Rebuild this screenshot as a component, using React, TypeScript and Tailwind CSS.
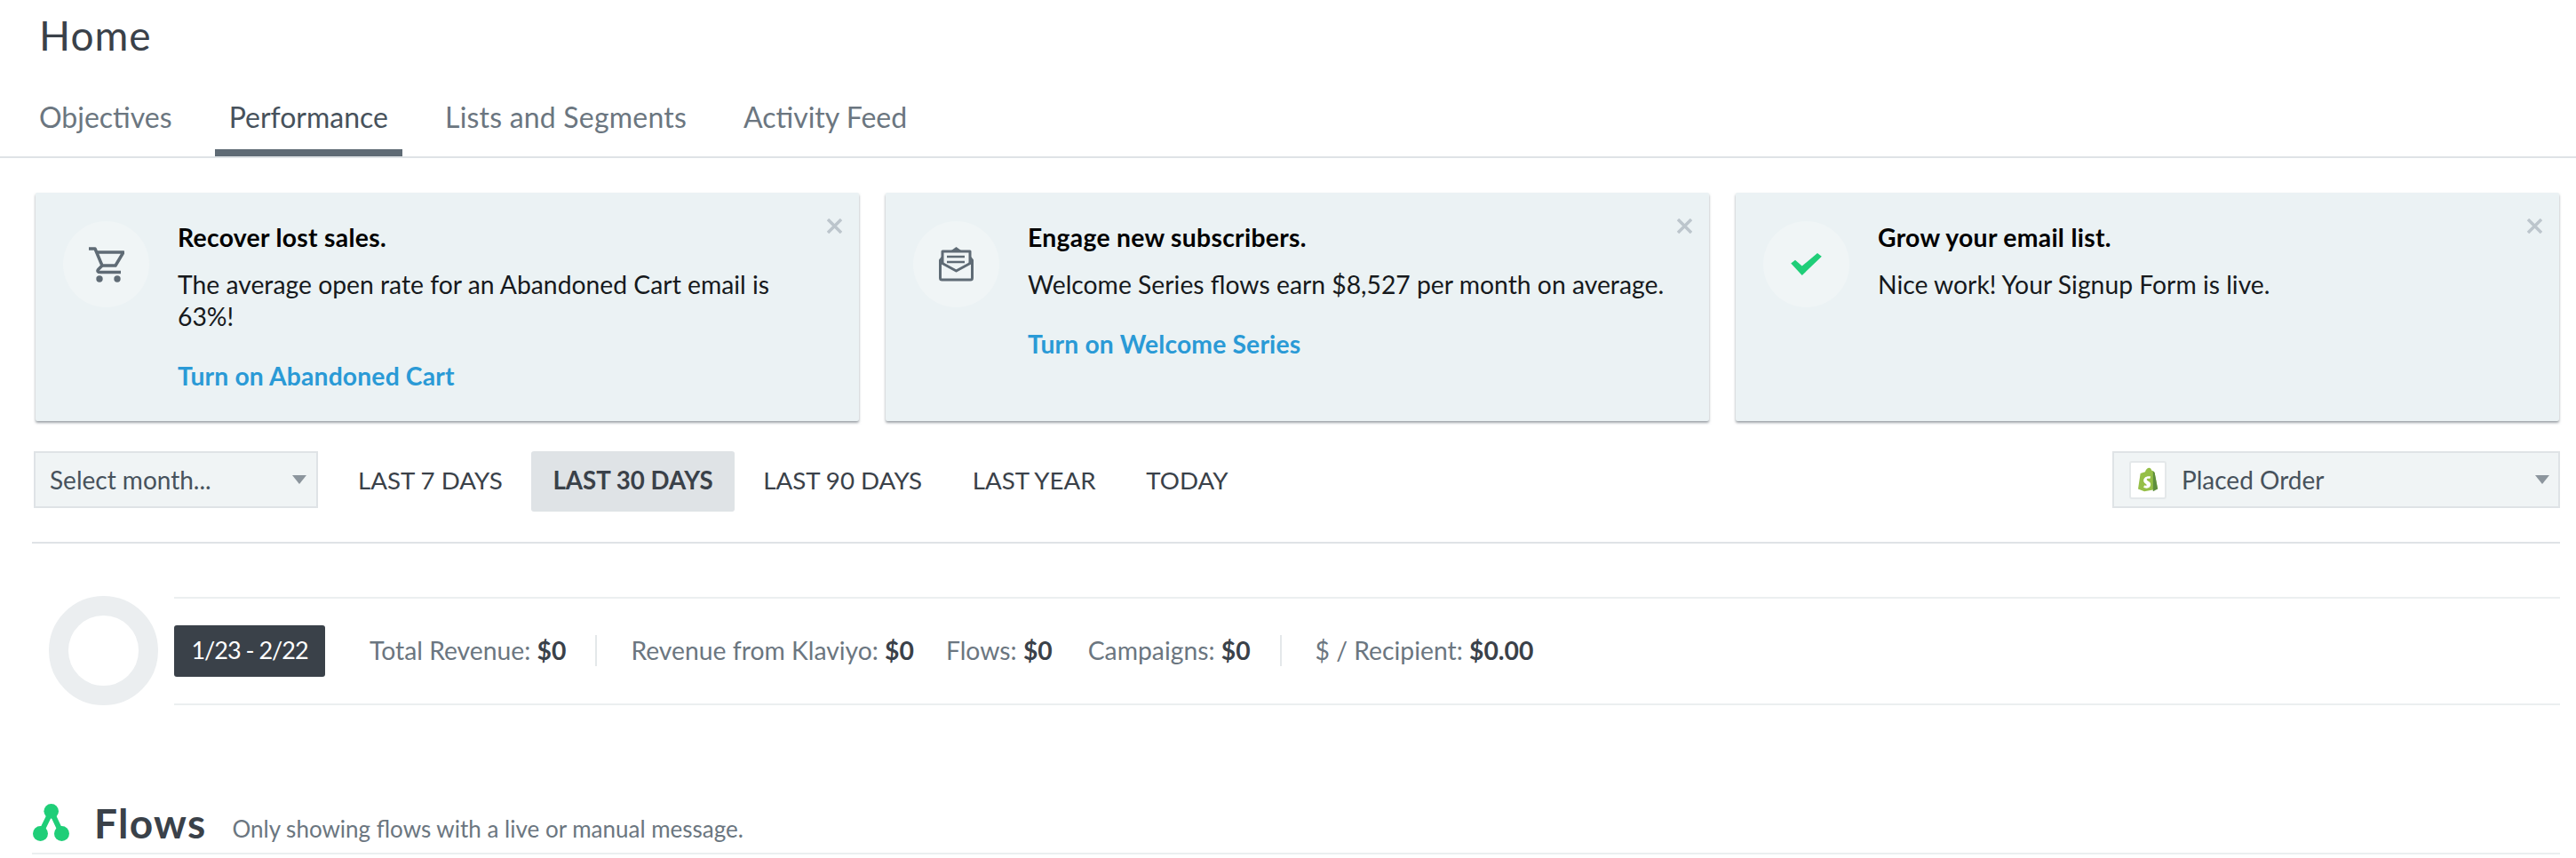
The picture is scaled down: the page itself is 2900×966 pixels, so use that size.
import { ReactNode } from 'react';

function CartIcon() {
    return (
        <svg width="40" height="40" viewBox="0 0 40 40" fill="none" stroke="#5f6b75" strokeWidth="3.500">
            <path d="M0 2h7l8 19h15l9-15H9" strokeLinejoin="round" />
            <path d="M15 21l-4 4c-2 2-1 3.500 2 3.500h23" strokeLinejoin="round" />
            <circle cx="12" cy="36" r="3.700" fill="#5f6b75" stroke="none" />
            <circle cx="32" cy="36" r="3.700" fill="#5f6b75" stroke="none" />
        </svg>
    );
}

function MailIcon() {
    return (
        <svg width="39" height="39" viewBox="0 0 39 39" fill="none" stroke="#5f6b75" strokeWidth="3">
            <path d="M4 18V5h31v13" strokeLinejoin="round" />
            <path d="M14 4l5.500-4L25 4z" fill="#5f6b75" stroke="none" />
            <path d="M9 11h20M9 17h20" strokeWidth="2.500" />
            <path d="M4 12l-2.500 3v20a2 2 0 0 0 2 2h32a2 2 0 0 0 2-2V15L35 12" strokeLinejoin="round" />
            <path d="M3 18l16.500 9L36 18" strokeLinejoin="round" />
        </svg>
    );
}

function CheckIcon() {
    return (
        <svg width="35" height="25" viewBox="0 0 36 26" fill="#1fce78">
            <path d="M0 12l5-4 8 7L31 0l5 4-23 22z" />
        </svg>
    );
}

function CloseIcon() {
    return (
        <svg width="17" height="17" viewBox="0 0 17 17" stroke="#bcc5cc" strokeWidth="3.500">
            <path d="M1 1l15 15M16 1L1 16" />
        </svg>
    );
}

function Caret() {
    return <div className="w-0 h-0 border-l-[8.500px] border-r-[8.500px] border-t-[10px] border-l-transparent border-r-transparent border-t-[#8c959d]" />;
}

function ShopifyIcon() {
    return (
        <svg width="23" height="28" viewBox="0 0 26 30">
            <path d="M3 7l6-2c1-3 3-5 5-5s3 2 3 3l2 1 2 2 4 21-17 3L0 27z" fill="#95bf47" />
            <path d="M19 4l2 2 4 21-6 3z" fill="#5e8e3e" />
            <path d="M16 11l-1 3c-3-1-4 0-4 1 0 2 5 2 5 6 0 3-2 5-5 5-2 0-4-1-4-1l1-3c1 1 3 1 3 0 0-2-4-2-4-6 0-3 3-6 9-5z" fill="#fff" />
        </svg>
    );
}

function FlowsIcon() {
    return (
        <svg width="41" height="42" viewBox="0 0 41 42" fill="#1fce78">
            <circle cx="20.700" cy="8.300" r="8.300" />
            <circle cx="8.500" cy="33.500" r="8.500" />
            <circle cx="32.500" cy="33.500" r="8.500" />
            <path d="M20.700 8.500L8.500 33.500M20.700 8.500l11.800 25" stroke="#1fce78" strokeWidth="6" />
        </svg>
    );
}

function PromoCard({ icon, title, body, link }: { icon: ReactNode; title: string; body: string; link?: string }) {
    return (
        <div className="relative flex-1 h-[257px] bg-[#ebf2f4] shadow-[0_2px_3px_rgba(90,100,110,0.6)] pl-[31px] pt-[32px] flex rounded-[2px]">
            <div className="w-[97px] h-[97px] rounded-full bg-[#f0f5f6] flex items-center justify-center shrink-0">{icon}</div>
            <div className="ml-[32px] w-[735px]">
                <h3 className="text-[28.300px] tracking-[0.300px] leading-[36px] font-bold text-black">{title}</h3>
                <p className="text-[28.300px] leading-[36px] text-[#16191c] mt-[17px]">{body}</p>
                {link && <a className="block text-[28.300px] tracking-[0.150px] leading-[36px] font-bold text-[#2a9ad6] mt-[31px]">{link}</a>}
            </div>
            <button className="absolute right-[19px] top-[29px]"><CloseIcon /></button>
        </div>
    );
}

function Stat({ label, value, className }: { label: string; value: string; className?: string }) {
    return (
        <span className={className}>
            {label} <b className="font-bold text-[#3a4149]">{value}</b>
        </span>
    );
}

export default function App() {
    const tabs = ['Objectives', 'Performance', 'Lists and Segments', 'Activity Feed'];
    const ranges = ['LAST 7 DAYS', 'LAST 30 DAYS', 'LAST 90 DAYS', 'LAST YEAR', 'TODAY'];

    return (
        <div className="w-[2900px] h-[966px] overflow-hidden bg-white [font-family:Lato,sans-serif]">
            <h1 className="pl-[44px] pt-[14px] text-[46px] tracking-[1px] leading-[51px] text-[#3a4149]">Home</h1>

            <div className="flex gap-[32px] pl-[28px] mt-[51px] h-[60px] border-b-[2px] border-[#dfe3e6] box-content">
                {tabs.map((tab) => (
                    <div key={tab} className={`px-[16px] h-[60px] text-[32px] leading-[32px] ${tab === 'Lists and Segments' ? 'tracking-[0.200px]' : ''} ${tab === 'Performance' ? 'border-b-[8px] border-[#5f6b75] text-[#47525c]' : 'text-[#6b7680]'}`}>
                        {tab}
                    </div>
                ))}
            </div>

            <div className="flex gap-[30px] pl-[40px] pr-[19px] mt-[39px]">
                <PromoCard icon={<CartIcon />} title="Recover lost sales." body="The average open rate for an Abandoned Cart email is 63%!" link="Turn on Abandoned Cart" />
                <PromoCard icon={<MailIcon />} title="Engage new subscribers." body="Welcome Series flows earn $8,527 per month on average." link="Turn on Welcome Series" />
                <PromoCard icon={<CheckIcon />} title="Grow your email list." body="Nice work! Your Signup Form is live." />
            </div>

            <div className="flex items-start mt-[34px] ml-[38px] mr-[18px] h-[68px]">
                <div className="w-[320px] h-[64px] bg-[#f0f4f5] border-[2px] border-[#dfe3e6] flex items-center justify-between pl-[16px] pr-[11px] text-[28px] text-[#47525c]">
                    <span>Select month...</span>
                    <Caret />
                </div>
                <div className="flex ml-[21px] gap-[8.700px]">
                    {ranges.map((r) => (
                        <div key={r} className={`h-[68px] px-[24px] leading-[66px] text-[27.700px] rounded-[3px] ${r === 'LAST 30 DAYS' ? 'bg-[#dfe3e6] font-bold text-[#3a4149]' : 'text-[#3a4149]'}`}>
                            {r}
                        </div>
                    ))}
                </div>
                <div className="ml-auto w-[504px] h-[64px] bg-[#f0f4f5] border-[2px] border-[#dfe3e6] flex items-center pl-[17px] pr-[10px] text-[28px] text-[#47525c]">
                    <div className="w-[42px] h-[43px] bg-white border-[2px] border-[#e4e8ea] rounded-[3px] flex items-center justify-center mr-[17px]"><ShopifyIcon /></div>
                    <span>Placed Order</span>
                    <div className="ml-auto"><Caret /></div>
                </div>
            </div>

            <div className="h-[2px] bg-[#dfe3e6] ml-[36px] mt-[34px] w-[2846px]" />

            <div className="flex items-center ml-[55px] mr-[18px] mt-[59px]">
                <div className="w-[123px] h-[123px] rounded-full border-[22px] border-[#ebeef0] shrink-0" />
                <div className="flex-1 ml-[18px] h-[122px] border-y-[2px] border-[#ebeff0] flex items-center text-[28.300px] text-[#6b7680]">
                    <div className="w-[170px] h-[58px] bg-[#3a4149] rounded-[3px] text-white text-[27px] tracking-[-1px] flex items-center justify-center mr-[50px]">1/23 - 2/22</div>
                    <Stat label="Total Revenue:" value="$0" />
                    <div className="w-[2px] h-[35px] bg-[#e4e8ea] ml-[33px] mr-[38px]" />
                    <Stat label="Revenue from Klaviyo:" value="$0" />
                    <Stat label="Flows:" value="$0" className="ml-[36px]" />
                    <Stat label="Campaigns:" value="$0" className="ml-[40px]" />
                    <div className="w-[2px] h-[35px] bg-[#e4e8ea] ml-[33px] mr-[38px]" />
                    <Stat label="$ / Recipient:" value="$0.00" />
                </div>
            </div>

            <div className="flex items-end ml-[37px] mt-[111px] h-[42px]">
                <FlowsIcon />
                <h2 className="ml-[28px] text-[46px] tracking-[1.300px] leading-[40px] font-bold text-[#3a4149]">Flows</h2>
                <p className="ml-[29px] pb-[2px] text-[26px] leading-[24px] text-[#6b7680]">Only showing flows with a live or manual message.</p>
            </div>
            <div className="h-[2px] bg-[#ebeff0] ml-[36px] w-[2846px] mt-[13px]" />
        </div>
    );
}
